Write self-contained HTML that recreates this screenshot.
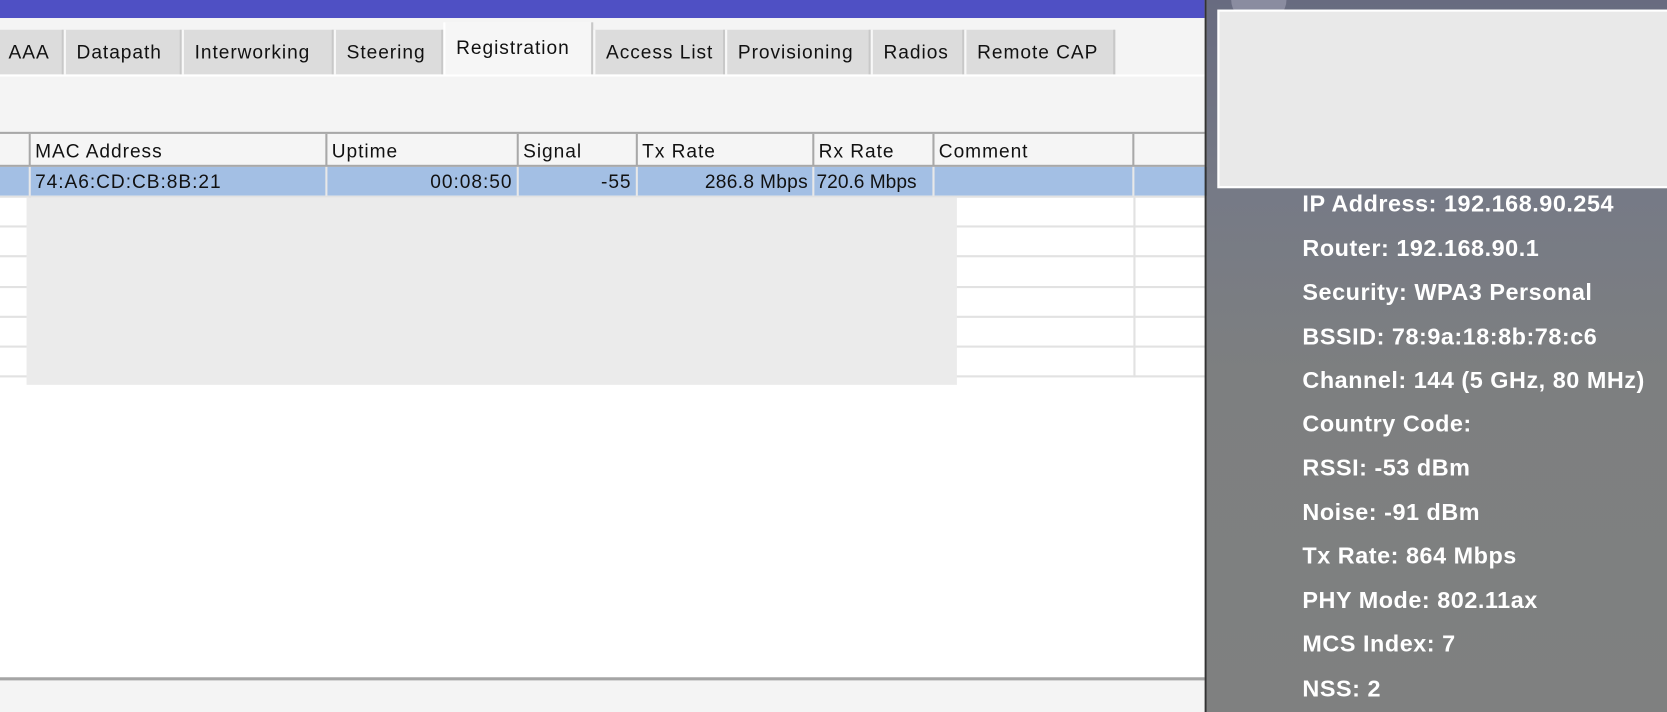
<!DOCTYPE html>
<html><head><style>
*{margin:0;padding:0;box-sizing:border-box}
body{width:1667px;height:706px;overflow:hidden;position:relative;background:#fff;font-family:"Liberation Sans","DejaVu Sans",sans-serif}
#w{position:absolute;left:0;top:0;width:1568px;height:664px;transform:scale(1.0632);transform-origin:0 0}
.a{position:absolute}
.tab{position:absolute;top:28px;height:42px;background:#dcdcdc;border-left:2px solid #f8f8f8;border-right:2px solid #c8c8c8;font-size:18px;letter-spacing:0.9px;color:#111;line-height:42px;padding-left:10px;white-space:nowrap;overflow:hidden}
.hd{position:absolute;top:126px;height:30px;font-size:18px;letter-spacing:0.9px;color:#111;line-height:32px;padding-left:4px;border-right:2px solid #a8a8a8;background:#f5f5f5;white-space:nowrap;overflow:hidden}
.cl{position:absolute;top:157px;height:27px;font-size:18px;letter-spacing:0.9px;color:#111;line-height:28px;padding:0 4px;border-right:2px solid #e8e8e8;background:#a3bfe4;white-space:nowrap;overflow:hidden}
.r{text-align:right}
.ln{position:absolute;left:0;width:1133px;height:2px;background:#e2e2e2}
.t{position:absolute;left:1225px;color:#fff;font-size:22px;font-weight:bold;line-height:24px;letter-spacing:0.5px;white-space:nowrap}
</style></head><body><div id="w">
<div class="a" style="left:0;top:0;width:1133px;height:17px;background:#4f50c4"></div>
<div class="a" style="left:0;top:17px;width:1133px;height:108px;background:#f4f4f4"></div>
<div class="tab" style="left:-2px;width:62px;padding-left:8px">AAA</div>
<div class="tab" style="left:60px;width:111px">Datapath</div>
<div class="tab" style="left:171px;width:143px">Interworking</div>
<div class="tab" style="left:314px;width:103px">Steering</div>
<div class="tab" style="left:417px;top:21px;height:49px;width:141px;background:#f6f6f6;line-height:48px;border-left:2px solid #fff">Registration</div>
<div class="tab" style="left:558px;width:124px">Access List</div>
<div class="tab" style="left:682px;width:137px">Provisioning</div>
<div class="tab" style="left:819px;width:88px">Radios</div>
<div class="tab" style="left:907px;width:142px">Remote CAP</div>
<div class="a" style="left:0;top:70px;width:1133px;height:2px;background:#fff"></div>
<div class="a" style="left:0;top:124px;width:1133px;height:2px;background:#a8a8a8"></div>
<div class="hd" style="left:0;width:29px"></div>
<div class="hd" style="left:29px;width:279px">MAC Address</div>
<div class="hd" style="left:308px;width:180px">Uptime</div>
<div class="hd" style="left:488px;width:112px">Signal</div>
<div class="hd" style="left:600px;width:166px">Tx Rate</div>
<div class="hd" style="left:766px;width:113px">Rx Rate</div>
<div class="hd" style="left:879px;width:188px">Comment</div>
<div class="hd" style="left:1067px;width:70px;border:none"></div>
<div class="a" style="left:0;top:155px;width:1133px;height:2px;background:#a8a8a8"></div>
<div class="cl" style="left:0;width:29px"></div>
<div class="cl" style="left:29px;width:279px">74:A6:CD:CB:8B:21</div>
<div class="cl r" style="left:308px;width:180px">00:08:50</div>
<div class="cl r" style="left:488px;width:112px">-55</div>
<div class="cl r" style="left:600px;width:166px;letter-spacing:0.3px">286.8 Mbps</div>
<div class="cl" style="left:766px;width:113px;padding:0 2px;letter-spacing:0px">720.6 Mbps</div>
<div class="cl" style="left:879px;width:188px"></div>
<div class="cl" style="left:1067px;width:70px;border:none"></div>
<div class="ln" style="top:184px"></div>
<div class="ln" style="top:212px"></div>
<div class="ln" style="top:240px"></div>
<div class="ln" style="top:269px"></div>
<div class="ln" style="top:297px"></div>
<div class="ln" style="top:325px"></div>
<div class="ln" style="top:353px"></div>
<div class="a" style="left:27px;top:184px;width:2px;height:171px;background:#e2e2e2"></div>
<div class="a" style="left:1066px;top:184px;width:2px;height:171px;background:#e2e2e2"></div>
<div class="a" style="left:25px;top:186px;width:875px;height:176px;background:#ebebeb"></div>
<div class="a" style="left:0;top:637px;width:1133px;height:3px;background:#a5a5a5"></div>
<div class="a" style="left:0;top:640px;width:1133px;height:30px;background:#f4f4f4"></div>
<div class="a" style="left:1133px;top:0;width:540px;height:670px;background:linear-gradient(#686b80 0px,#767a86 180px,#7d7f80 350px,#7f8080 670px);border-left:2px solid #333"></div>
<div class="a" style="left:1158px;top:0;width:52px;height:20px;border-radius:0 0 26px 26px;background:#8a8ca0"></div>
<div class="a" style="left:1145px;top:9px;width:530px;height:168px;background:#e9e9e9;border:2px solid #fff"></div>
<div class="t" style="top:180px">IP Address: 192.168.90.254</div>
<div class="t" style="top:222px">Router: 192.168.90.1</div>
<div class="t" style="top:263px">Security: WPA3 Personal</div>
<div class="t" style="top:305px">BSSID: 78:9a:18:8b:78:c6</div>
<div class="t" style="top:346px">Channel: 144 (5 GHz, 80 MHz)</div>
<div class="t" style="top:387px">Country Code:</div>
<div class="t" style="top:428px">RSSI: -53 dBm</div>
<div class="t" style="top:470px">Noise: -91 dBm</div>
<div class="t" style="top:511px">Tx Rate: 864 Mbps</div>
<div class="t" style="top:553px">PHY Mode: 802.11ax</div>
<div class="t" style="top:594px">MCS Index: 7</div>
<div class="t" style="top:636px">NSS: 2</div>
</div></body></html>
